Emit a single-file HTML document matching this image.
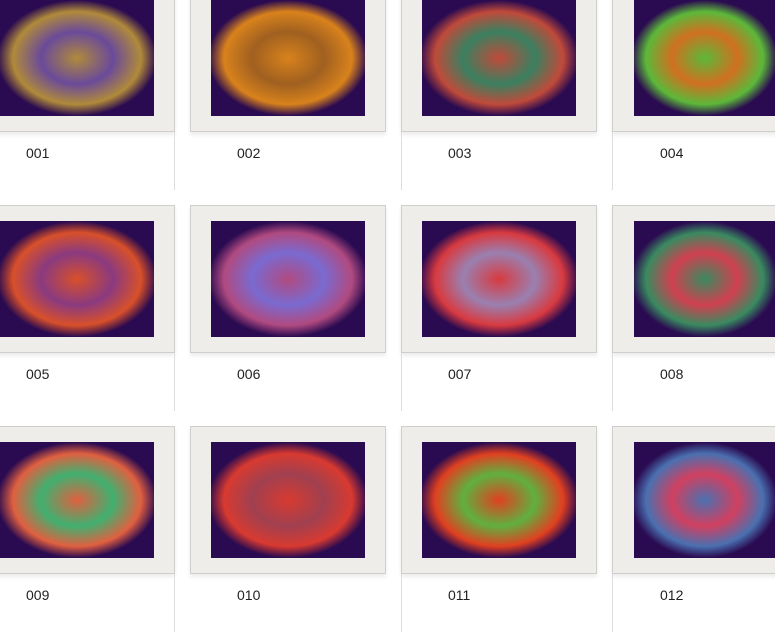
<!DOCTYPE html><html><head><style>
body{margin:0;width:775px;height:625px;overflow:hidden;background:#fff;font-family:"Liberation Sans",sans-serif;position:relative}
.f{position:absolute;background:#efede9;border:1px solid #d0cecb;box-sizing:border-box;box-shadow:0 3px 4px rgba(0,0,0,.08)}
.i{position:absolute;background:#1a0630}
.l{position:absolute;font-size:14px;color:#222}
.v{position:absolute;width:1px;background:#ddd}
</style></head><body>
<div id="g"></div>
<script>
var cols=[[-22,0],[190,211],[401,422],[612,634]];
var rows=[[-16,0,153],[205,221,374],[426,442,595]];
var cs=[["#b08a3a","#6a4a9a"],["#d8821c","#a06020"],["#c04a3a","#3a8060"],["#5cb83a","#d07020"],["#d8502a","#8a3a80"],["#b04a80","#7a6ad0"],["#d83a40","#9a80b0"],["#3a8a60","#d04050"],["#e06040","#40b070"],["#d83a30","#a04050"],["#e04020","#60b040"],["#4a70b0","#d04060"]];
var h="",n=0;
rows.forEach(function(r){cols.forEach(function(c){n++;var k=cs[n-1];
var w=c[0]==612?200:196;
h+='<div class="f" style="left:'+c[0]+'px;top:'+r[0]+'px;width:'+(c[0]<0?197:w)+'px;height:148px"></div>';
var iw=c[1]==634?141:154;
h+='<div class="i" style="left:'+c[1]+'px;top:'+r[1]+'px;width:'+iw+'px;height:116px;background:radial-gradient(ellipse 52% 50% at 50% 50%,'+k[0]+' 0,'+k[1]+' 45%,'+k[0]+' 80%,#2a0a50 100%),#1a0630"></div>';
var lx=[26,237,448,660][cols.indexOf(c)];
h+='<div class="l" style="left:'+lx+'px;top:'+(r[2]-8)+'px">'+('00'+n).slice(-3)+'</div>';
});
[174,401,612].forEach(function(x){h+='<div class="v" style="left:'+x+'px;top:'+(r[0]+148)+'px;height:58px"></div>'});
});
document.getElementById('g').innerHTML=h;
</script>
</body></html>
